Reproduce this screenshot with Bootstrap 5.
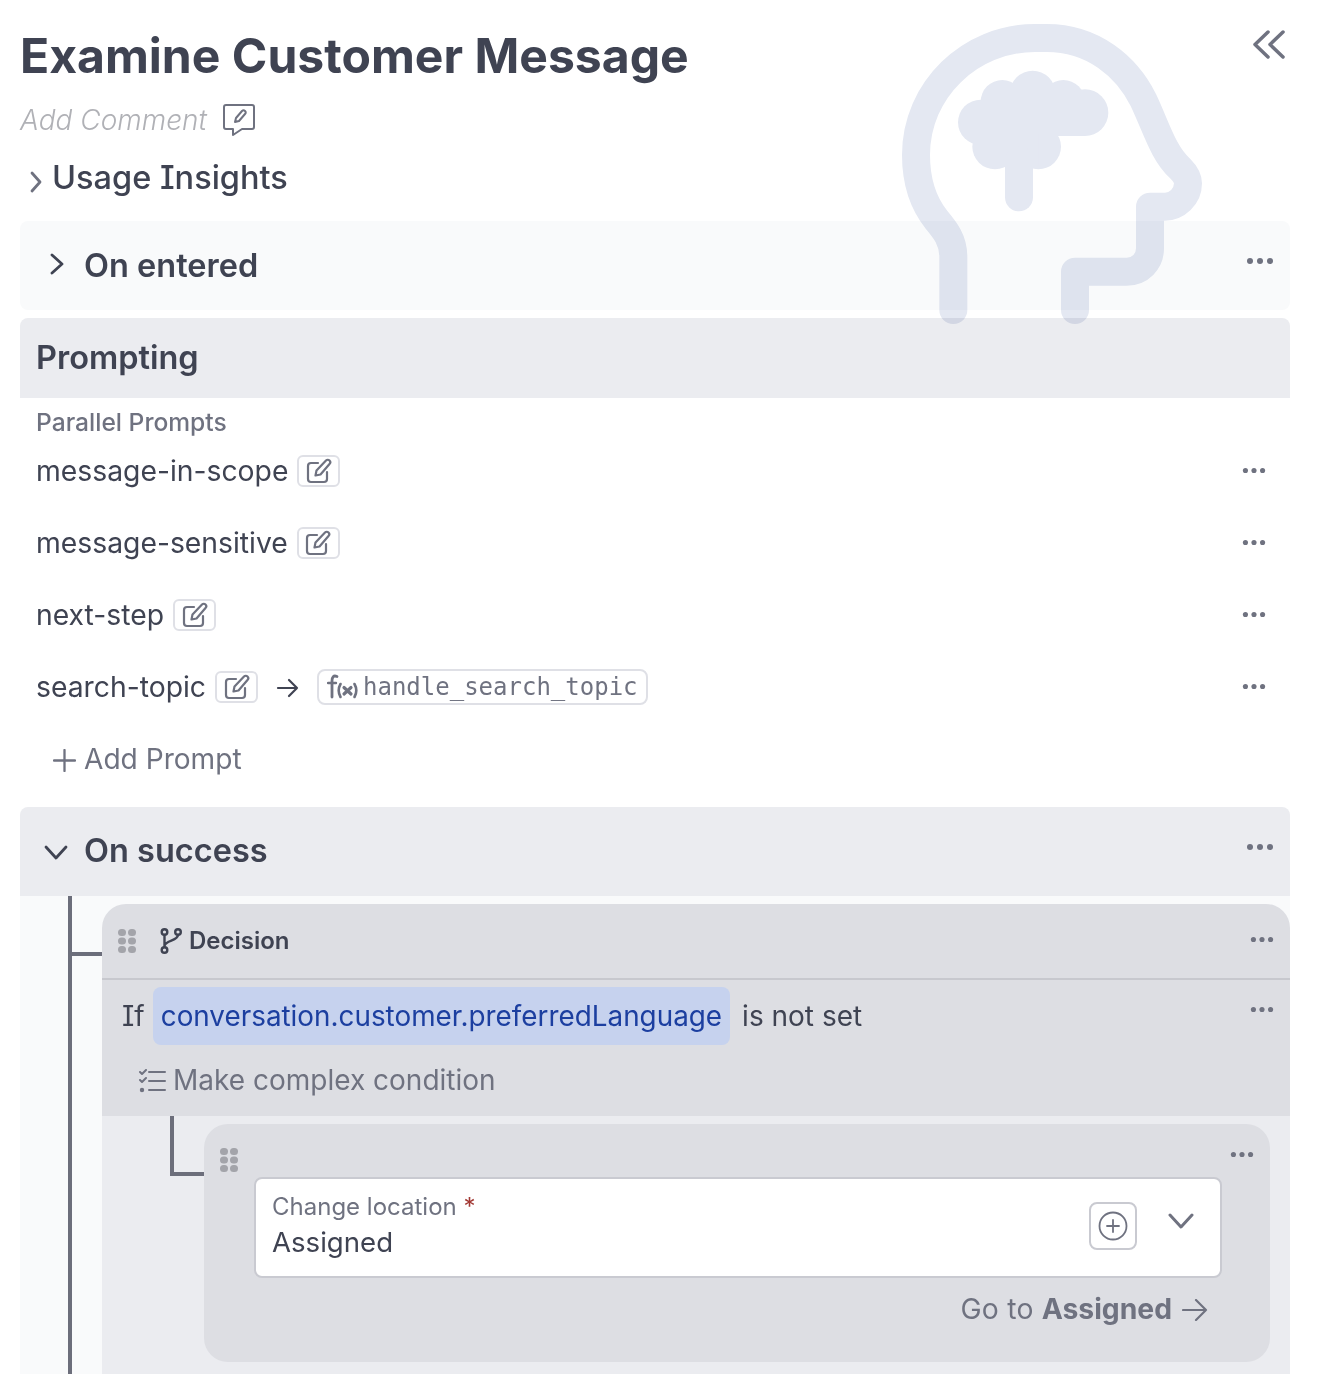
<!DOCTYPE html>
<html lang="en">
<head>
  <meta charset="UTF-8" />
  <title>Examine Customer Message</title>
  <link href="https://cdn.jsdelivr.net/npm/bootstrap@5.3.0/dist/css/bootstrap.min.css" rel="stylesheet">
  <style>
    body {
      background: #fff;
      color: #3f4352;
      font-family: Inter, "Liberation Sans", sans-serif;
      font-feature-settings: "cv08";
      font-size: 28px;
      line-height: 1.2;
      height: 1374px;
      overflow: hidden;
    }
    svg { display: block; flex: none; }
    .page-wrap { padding: 20px 36px 0 20px; position: relative; }
    .head-mark {
      position: absolute; left: 880px; top: 0; width: 446px; height: 340px;
      mix-blend-mode: multiply; pointer-events: none;
    }
    .collapse-all { position: absolute; left: 1253px; top: 30px; }
    .main-title { height: 72px; margin: 0; font-size: 48.100px; font-weight: 700; line-height: 71px; }
    .comment-row { height: 44px; margin-top: 6px; }
    .comment-text { color: #b0b1b6; font-style: italic; font-weight: 300; font-size: 28px; white-space: nowrap; padding-top: 2px; }
    .insights-row { height: 44px; margin-top: 14px; padding-left: 10px; font-size: 32.500px; font-weight: 500; }
    .insights-row span { margin: -2px 0 0 2px; }
    .section-bar { height: 89px; border-radius: 8px; padding: 0 16px 0 24px; }
    .section-bar h2 { margin: 0; font-size: 32.500px; font-weight: 600; }
    .entered-arrow { margin: 0 20px 4px 6px; }
    .success-arrow { margin-right: 16px; }
    .success-bar h2 { margin-bottom: 2px; }
    .bar-light { background: #f9fafb; margin-top: 21px; }
    .bar-mid { background: #ebecf0; }
    .prompt-head { height: 80px; margin-top: 8px; padding: 0 16px 2px; background: #ebecf0; border-radius: 8px 8px 0 0; font-size: 32.500px; font-weight: 600; }
    .small-head { color: #6f7280; font-size: 24.600px; font-weight: 500; padding: 10px 16px 0; height: 41px; }
    .prompt-row { height: 72px; padding: 0 24px 0 16px; font-size: 28.300px; }
    .prompt-row.first-row { margin-top: -3px; }
    .prompt-name { margin-bottom: 1px; }
    .edit-chip { width: 43px; height: 32px; border: 2px solid #dfe0e6; border-radius: 6px; margin: 0 0 2px 9px; }
    .flow-arrow { margin-left: 17px; }
    .fn-chip { height: 36px; border: 2px solid #dfe0e6; border-radius: 8px; padding: 0 8px; margin: 0 0 2px 18px; color: #6f7280; font-family: "DejaVu Sans Mono", monospace; font-size: 24px; }
    .fn-icon { margin-right: 4px; }
    .row-dots { margin-bottom: 4px; }
    .bar-dots { margin-bottom: 10px; }
    .add-prompt { height: 72px; padding-left: 33px; color: #6f7280; font-size: 28.100px; }
    .success-bar { margin-top: 11px; border-radius: 8px 8px 0 0; }
    .success-body { background: #f9fafb; padding-left: 48px; }
    .tree-line { border-left: 4px solid #6c6e7b; padding: 8px 0 0 30px; position: relative; }
    .tree-line::before { content: ""; position: absolute; left: 0; top: 56px; width: 30px; height: 4px; background: #6c6e7b; }
    .decision-box { background: #dddee3; border-radius: 24px 24px 0 0; }
    .decision-top { height: 76px; padding: 0 16px; font-size: 24px; font-weight: 600; border-bottom: 2px solid #c7c8ce; }
    .decision-icon { margin: 0 7px 0 24px; }
    .if-row { height: 62px; padding: 6px 16px 0 20px; margin-top: 1px; }
    .if-dots { margin-top: 19px; }
    .var-chip { background: #c6d2ee; color: #1c3fa0; border-radius: 8px; height: 58px; padding: 2px 8px 0; margin: 0 12px 0 8px; display: flex; align-items: center; font-size: 27.850px; }
    .if-word { height: 58px; padding-top: 2px; }
    .complex-row { height: 73px; padding: 2px 0 0 36px; gap: 7px; color: #6f7280; }
    .nested-zone { background: #ebecf0; padding: 0 20px 12px 68px; }
    .elbow { width: 34px; height: 60px; border-left: 4px solid #6c6e7b; border-bottom: 4px solid #6c6e7b; flex: none; }
    .nested-box { background: #dddee3; border-radius: 24px; height: 238px; margin-top: 8px; padding: 0 16px 0 16px; }
    .nested-top { height: 53px; }
    .nested-dots { margin-top: 3px; }
    .location-field { height: 101px; margin: 0 32px 0 34px; padding: 0 26px 0 16px; background: #fff; border: 2px solid #c9cad1; border-radius: 8px; }
    .field-text { padding-bottom: 3px; }
    .field-label { color: #6f7280; font-size: 24px; line-height: 30px; margin-bottom: 4px; }
    .field-label i { color: #a33a35; font-style: normal; }
    .field-value { font-size: 27.600px; }
    .plus-chip { width: 48px; height: 48px; border: 2px solid #c9cad1; border-radius: 8px; margin: 0 31px 4px 0; }
    .field-arrow { margin-bottom: 14px; }
    .goto-row { height: 66px; padding: 0 46px 2px 0; color: #6f7280; font-size: 28.300px; }
    .goto-row b { font-weight: 700; margin: 0 10px 0 8px; }
    .goto-row span { letter-spacing: .25px; }
  </style>
</head>
<body>

<svg width="0" height="0" class="position-absolute">
  <symbol id="dots" viewBox="0 0 28 8"><circle cx="4" cy="4" r="3" fill="#6f7280"/><circle cx="14" cy="4" r="3" fill="#6f7280"/><circle cx="24" cy="4" r="3" fill="#6f7280"/></symbol>
  <symbol id="edit" viewBox="0 0 26 26" fill="none" stroke="#6f7280" stroke-width="2.200" stroke-linecap="round" stroke-linejoin="round"><path d="M12 5H5A3 3 0 0 0 2 8V21A3 3 0 0 0 5 24H18A3 3 0 0 0 21 21V14"/><path d="M9.500 17.500l1-5L20 2.500c1-1 2.500-1 3.500 0s1 2.500 0 3.500L14.500 16.500z"/></symbol>
  <symbol id="grip" viewBox="0 0 18 24" fill="#a3a4aa"><rect width="8" height="7" rx="3.500"/><rect x="10" width="8" height="7" rx="3.500"/><rect y="8.500" width="8" height="7" rx="3.500"/><rect x="10" y="8.500" width="8" height="7" rx="3.500"/><rect y="17" width="8" height="7" rx="3.500"/><rect x="10" y="17" width="8" height="7" rx="3.500"/></symbol>
</svg>

<div class="page-wrap">
  <svg class="head-mark" viewBox="0 0 1338 1020">
    <g fill="#e4e8f2" stroke="none">
      <path d="M220 930V770C220 720 195 690 170 660C130 610 108 540 108 465C108 270 270 114 465 114H500C640 114 740 200 790 300C830 385 850 460 900 505C915 520 924 535 924 550C924 590 890 620 855 620H810V745C810 785 780 815 740 815H585V930" fill="none" stroke="#e4e8f2" stroke-width="84" stroke-linecap="round" stroke-linejoin="round"/>
      <circle cx="302" cy="367" r="68"/><circle cx="367" cy="305" r="65"/><circle cx="458" cy="280" r="68"/><circle cx="550" cy="305" r="65"/><circle cx="615" cy="338" r="70"/><circle cx="345" cy="440" r="68"/><circle cx="475" cy="440" r="68"/>
      <rect x="300" y="300" width="315" height="108"/>
      <rect x="345" y="400" width="130" height="100"/>
      <path d="M417 480V592" fill="none" stroke="#e4e8f2" stroke-width="84" stroke-linecap="round"/>
    </g>
  </svg>
  <svg class="collapse-all" width="32" height="29" viewBox="0 0 32 29" fill="none" stroke="#6f7280" stroke-width="3.500" stroke-linecap="round" stroke-linejoin="round"><path d="M15 2L2 14.500L15 27"/><path d="M30 2L17 14.500L30 27"/></svg>

  <h1 class="main-title">Examine Customer Message</h1>
  <div class="comment-row d-flex align-items-center gap-3">
    <span class="comment-text">Add Comment</span>
    <svg width="32" height="32" viewBox="0 0 32 32" fill="none" stroke="#6f7280" stroke-width="2" stroke-linejoin="round"><path d="M3 1H29A2 2 0 0 1 31 3V23A2 2 0 0 1 29 25H19L10 31V25H3A2 2 0 0 1 1 23V3A2 2 0 0 1 3 1Z"/><path d="M12 18l1-4 6-7c1-1 2-1 3 0s1 2 0 3l-6 7z"/></svg>
  </div>
  <div class="insights-row d-flex align-items-center gap-2">
    <svg width="12" height="22" viewBox="0 0 12 22" fill="none" stroke="#6f7280" stroke-width="2.800" stroke-linecap="round" stroke-linejoin="round" class="mt-2"><path d="M2 2L10 11L2 20"/></svg>
    <span>Usage Insights</span>
  </div>

  <div class="section-bar bar-light d-flex align-items-center">
    <svg width="14" height="22" viewBox="0 0 14 22" fill="none" stroke="#3f4352" stroke-width="2.800" stroke-linecap="round" stroke-linejoin="round" class="entered-arrow"><path d="M2 2L12 11L2 20"/></svg>
    <h2>On entered</h2>
    <svg class="ms-auto bar-dots" width="28" height="8"><use href="#dots"/></svg>
  </div>

  <div class="prompt-head d-flex align-items-center">Prompting</div>
  <div class="small-head">Parallel Prompts</div>

  <div class="prompt-row first-row d-flex align-items-center">
    <span class="prompt-name">message-in-scope</span>
    <span class="edit-chip d-flex align-items-center justify-content-center"><svg width="26" height="26"><use href="#edit"/></svg></span>
    <svg class="ms-auto row-dots" width="24" height="7"><use href="#dots"/></svg>
  </div>
  <div class="prompt-row d-flex align-items-center">
    <span class="prompt-name">message-sensitive</span>
    <span class="edit-chip d-flex align-items-center justify-content-center"><svg width="26" height="26"><use href="#edit"/></svg></span>
    <svg class="ms-auto row-dots" width="24" height="7"><use href="#dots"/></svg>
  </div>
  <div class="prompt-row d-flex align-items-center">
    <span class="prompt-name">next-step</span>
    <span class="edit-chip d-flex align-items-center justify-content-center"><svg width="26" height="26"><use href="#edit"/></svg></span>
    <svg class="ms-auto row-dots" width="24" height="7"><use href="#dots"/></svg>
  </div>
  <div class="prompt-row d-flex align-items-center">
    <span class="prompt-name">search-topic</span>
    <span class="edit-chip d-flex align-items-center justify-content-center"><svg width="26" height="26"><use href="#edit"/></svg></span>
    <svg class="flow-arrow" width="24" height="20" viewBox="0 0 24 20" fill="none" stroke="#3f4352" stroke-width="2.200" stroke-linecap="round" stroke-linejoin="round"><path d="M3 10H22M14 2L22 10L14 18"/></svg>
    <span class="fn-chip d-flex align-items-center">
      <svg class="fn-icon" width="32" height="28" viewBox="0 0 32 28" fill="none" stroke="#6f7280" stroke-width="2.800" stroke-linecap="round"><path d="M10 3.500C6.500 2 5 4 5 8V24"/><path d="M1 10H9" stroke-width="2.400"/><path d="M13.500 11C11 15.500 11 19.500 13.500 24M27.500 11C30 15.500 30 19.500 27.500 24" stroke-width="2.600"/><path d="M17 14.500L24 21M24 14.500L17 21" stroke-width="3.200"/></svg>
      handle_search_topic
    </span>
    <svg class="ms-auto row-dots" width="24" height="7"><use href="#dots"/></svg>
  </div>
  <div class="add-prompt d-flex align-items-center gap-2">
    <svg width="23" height="23" viewBox="0 0 24 24" stroke="#6f7280" stroke-width="2.400" stroke-linecap="round"><path d="M12 1V23M1 12H23"/></svg>
    <span>Add Prompt</span>
  </div>

  <div class="section-bar bar-mid success-bar d-flex align-items-center">
    <svg width="24" height="16" viewBox="0 0 24 16" fill="none" stroke="#3f4352" stroke-width="2.800" stroke-linecap="round" stroke-linejoin="round" class="success-arrow"><path d="M2 3L12 14L22 3"/></svg>
    <h2>On success</h2>
    <svg class="ms-auto bar-dots" width="28" height="8"><use href="#dots"/></svg>
  </div>

  <div class="success-body">
    <div class="tree-line">
      <div class="decision-box">
        <div class="decision-top d-flex align-items-center">
          <svg width="18" height="24"><use href="#grip"/></svg>
          <svg class="decision-icon" width="22" height="26" viewBox="0 0 22 26" fill="none" stroke="#3f4352" stroke-width="2.400" stroke-linecap="round"><circle cx="4.500" cy="4" r="2.800"/><circle cx="4.500" cy="22" r="2.800"/><circle cx="18" cy="4" r="2.800"/><path d="M4.500 7V19M18 7C18 13 5 12 4.500 18"/></svg>
          <span>Decision</span>
          <svg class="ms-auto row-dots" width="24" height="7"><use href="#dots"/></svg>
        </div>
        <div class="if-row d-flex">
          <span class="if-word d-flex align-items-center">If</span>
          <span class="var-chip">conversation.customer.preferredLanguage</span>
          <span class="if-word d-flex align-items-center">is not set</span>
          <svg class="ms-auto if-dots" width="24" height="7"><use href="#dots"/></svg>
        </div>
        <div class="complex-row d-flex align-items-center">
          <svg width="28" height="24" viewBox="0 0 28 24" fill="none" stroke="#6f7280" stroke-width="2" stroke-linecap="round" stroke-linejoin="round"><path d="M2 3L4 5L8 1M2 11L4 13L8 9"/><circle cx="4" cy="21" r="1.200" fill="#6f7280"/><path d="M11 3H27M11 12H27M11 21H27"/></svg>
          <span>Make complex condition</span>
        </div>
      </div>
      <div class="nested-zone d-flex">
        <div class="elbow"></div>
        <div class="nested-box flex-grow-1">
          <div class="nested-top d-flex justify-content-between pt-4">
            <svg width="18" height="24"><use href="#grip"/></svg>
            <svg class="nested-dots" width="24" height="7"><use href="#dots"/></svg>
          </div>
          <div class="location-field d-flex align-items-center">
            <div class="field-text flex-grow-1">
              <div class="field-label">Change location <i>*</i></div>
              <div class="field-value">Assigned</div>
            </div>
            <span class="plus-chip d-flex align-items-center justify-content-center">
              <svg width="30" height="30" viewBox="0 0 30 30" fill="none" stroke="#6f7280" stroke-width="1.800" stroke-linecap="round"><circle cx="15" cy="15" r="13.500"/><path d="M15 9V21M9 15H21"/></svg>
            </span>
            <svg class="field-arrow" width="26" height="16" viewBox="0 0 26 16" fill="none" stroke="#6f7280" stroke-width="3" stroke-linecap="round" stroke-linejoin="round"><path d="M2 2L13 14L24 2"/></svg>
          </div>
          <div class="goto-row d-flex align-items-center justify-content-end">
            <span>Go to</span><b>Assigned</b>
            <svg width="26" height="22" viewBox="0 0 26 22" fill="none" stroke="#6f7280" stroke-width="2.200" stroke-linecap="round" stroke-linejoin="round"><path d="M1 11H24M14 1L24 11L14 21"/></svg>
          </div>
        </div>
      </div>
    </div>
  </div>
</div>

<script src="https://cdn.jsdelivr.net/npm/bootstrap@5.3.0/dist/js/bootstrap.bundle.min.js"></script>
</body>
</html>
